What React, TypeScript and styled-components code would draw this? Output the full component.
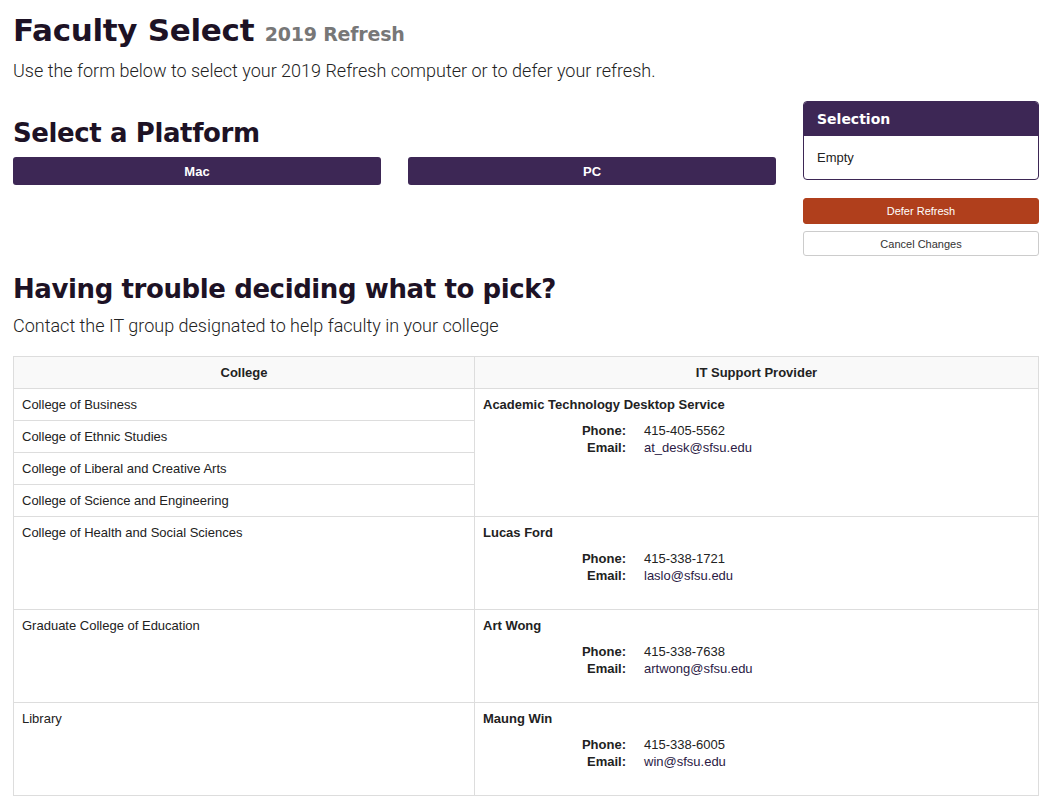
import styled, { createGlobalStyle } from "styled-components"

const GlobalStyle = createGlobalStyle`
    body {
        margin: 0;
        background: #fff;
        font-family: "Liberation Sans", Arial, sans-serif;
        color: #222;
    }
`

const purple = "#3d2755"
const ink = "#1d1225"

type Contact = { name: string; phone: string; email: string }
type Group = { colleges: string[]; contact: Contact }

const groups: Group[] = [
    {
        colleges: [
            "College of Business",
            "College of Ethnic Studies",
            "College of Liberal and Creative Arts",
            "College of Science and Engineering",
        ],
        contact: { name: "Academic Technology Desktop Service", phone: "415-405-5562", email: "at_desk@sfsu.edu" },
    },
    {
        colleges: ["College of Health and Social Sciences"],
        contact: { name: "Lucas Ford", phone: "415-338-1721", email: "laslo@sfsu.edu" },
    },
    {
        colleges: ["Graduate College of Education"],
        contact: { name: "Art Wong", phone: "415-338-7638", email: "artwong@sfsu.edu" },
    },
    {
        colleges: ["Library"],
        contact: { name: "Maung Win", phone: "415-338-6005", email: "win@sfsu.edu" },
    },
]

const App: React.FC = () => {
    return (
        <Page>
            <GlobalStyle />
            <Title>
                Faculty Select <small>2019 Refresh</small>
            </Title>
            <Lead>Use the form below to select your 2019 Refresh computer or to defer your refresh.</Lead>

            <TopRow>
                <Main>
                    <Heading>Select a Platform</Heading>
                    <PlatformRow>
                        <PlatformButton>Mac</PlatformButton>
                        <PlatformButton>PC</PlatformButton>
                    </PlatformRow>
                </Main>
                <Sidebar>
                    <Panel>
                        <PanelHeader>Selection</PanelHeader>
                        <PanelBody>Empty</PanelBody>
                    </Panel>
                    <SideButton $variant="defer">Defer Refresh</SideButton>
                    <SideButton $variant="cancel">Cancel Changes</SideButton>
                </Sidebar>
            </TopRow>

            <Heading $spaced>Having trouble deciding what to pick?</Heading>
            <Lead $small>Contact the IT group designated to help faculty in your college</Lead>

            <Table>
                <thead>
                    <tr>
                        <th>College</th>
                        <th>IT Support Provider</th>
                    </tr>
                </thead>
                <tbody>
                    {groups.map((g) =>
                        g.colleges.map((c, i) => (
                            <tr key={c}>
                                <CollegeCell>{c}</CollegeCell>
                                {i === 0 && (
                                    <ProviderCell rowSpan={g.colleges.length}>
                                        <ProviderName>{g.contact.name}</ProviderName>
                                        <ContactList>
                                            <dt>Phone:</dt>
                                            <dd>{g.contact.phone}</dd>
                                            <dt>Email:</dt>
                                            <dd>
                                                <EmailLink href={`mailto:${g.contact.email}`}>{g.contact.email}</EmailLink>
                                            </dd>
                                        </ContactList>
                                    </ProviderCell>
                                )}
                            </tr>
                        ))
                    )}
                </tbody>
            </Table>
        </Page>
    )
}
export default App

const Page = styled.div`
    padding: 0 13px 8px;
`
const Title = styled.h1`
    margin: 0;
    padding-top: 8px;
    font-family: "DejaVu Sans", sans-serif;
    font-weight: 700;
    font-size: 31px;
    line-height: 44px;
    letter-spacing: -0.3px;
    color: ${ink};

    small {
        font-size: 19px;
        color: #777;
        letter-spacing: -0.2px;
    }
`
const Lead = styled.p<{ $small?: boolean }>`
    margin: ${(p) => (p.$small ? "9px 0 19px" : "4px 0 0")};
    font-family: Roboto, sans-serif;
    font-weight: 300;
    font-size: 18px;
    line-height: 22px;
    color: #222;
`
const TopRow = styled.div`
    display: flex;
    gap: 27px;
    margin-top: 19px;
`
const Main = styled.div`
    flex: 1;
    padding-top: 15px;
`
const Heading = styled.h2<{ $spaced?: boolean }>`
    margin: ${(p) => (p.$spaced ? "16px 0 0" : "0 0 7px")};
    font-family: "DejaVu Sans", sans-serif;
    font-weight: 700;
    font-size: 26px;
    line-height: 34px;
    letter-spacing: -0.4px;
    color: ${ink};
`
const PlatformRow = styled.div`
    display: grid;
    grid-template-columns: 1fr 1fr;
    gap: 27px;
`
const PlatformButton = styled.button`
    height: 28px;
    border: none;
    border-radius: 3px;
    background: ${purple};
    color: #fff;
    font-family: "Liberation Sans", Arial, sans-serif;
    font-weight: 700;
    font-size: 13px;
    cursor: pointer;
`
const Sidebar = styled.div`
    width: 236px;
    display: flex;
    flex-direction: column;
    gap: 7px;
`
const Panel = styled.div`
    border: 1px solid ${purple};
    border-radius: 4px;
    overflow: hidden;
    margin-bottom: 11px;
`
const PanelHeader = styled.div`
    height: 34px;
    padding: 0 13px;
    display: flex;
    align-items: center;
    background: ${purple};
    color: #fff;
    font-family: "DejaVu Sans", sans-serif;
    font-weight: 700;
    font-size: 14px;
`
const PanelBody = styled.div`
    padding: 14px 13px;
    font-size: 13px;
    line-height: 15px;
    color: #222;
`
const SideButton = styled.button<{ $variant: "defer" | "cancel" }>`
    height: ${(p) => (p.$variant === "defer" ? "26px" : "25px")};
    border-radius: 3px;
    border: 1px solid ${(p) => (p.$variant === "defer" ? "#b03f1c" : "#ccc")};
    background: ${(p) => (p.$variant === "defer" ? "#b03f1c" : "#fff")};
    color: ${(p) => (p.$variant === "defer" ? "#fff" : "#333")};
    font-family: "Liberation Sans", Arial, sans-serif;
    font-size: 11px;
    cursor: pointer;
`
const Table = styled.table`
    width: 100%;
    border-collapse: collapse;
    font-size: 13px;
    line-height: 15px;
    color: #222;

    th,
    td {
        border: 1px solid #ddd;
        padding: 8px;
        vertical-align: top;
        text-align: left;
    }
    th {
        text-align: center;
        font-weight: 700;
        background: #f9f9f9;
    }
    th:first-child {
        width: 444px;
    }
`
const CollegeCell = styled.td``
const ProviderCell = styled.td``
const ProviderName = styled.div`
    font-weight: 700;
    margin-bottom: 10px;
`
const ContactList = styled.dl`
    display: grid;
    grid-template-columns: 143px auto;
    column-gap: 18px;
    margin: 0 0 17px;
    line-height: 17px;

    dt {
        text-align: right;
        font-weight: 700;
    }
    dd {
        margin: 0;
    }
`
const EmailLink = styled.a`
    color: #2b1a45;
    text-decoration: none;
`
